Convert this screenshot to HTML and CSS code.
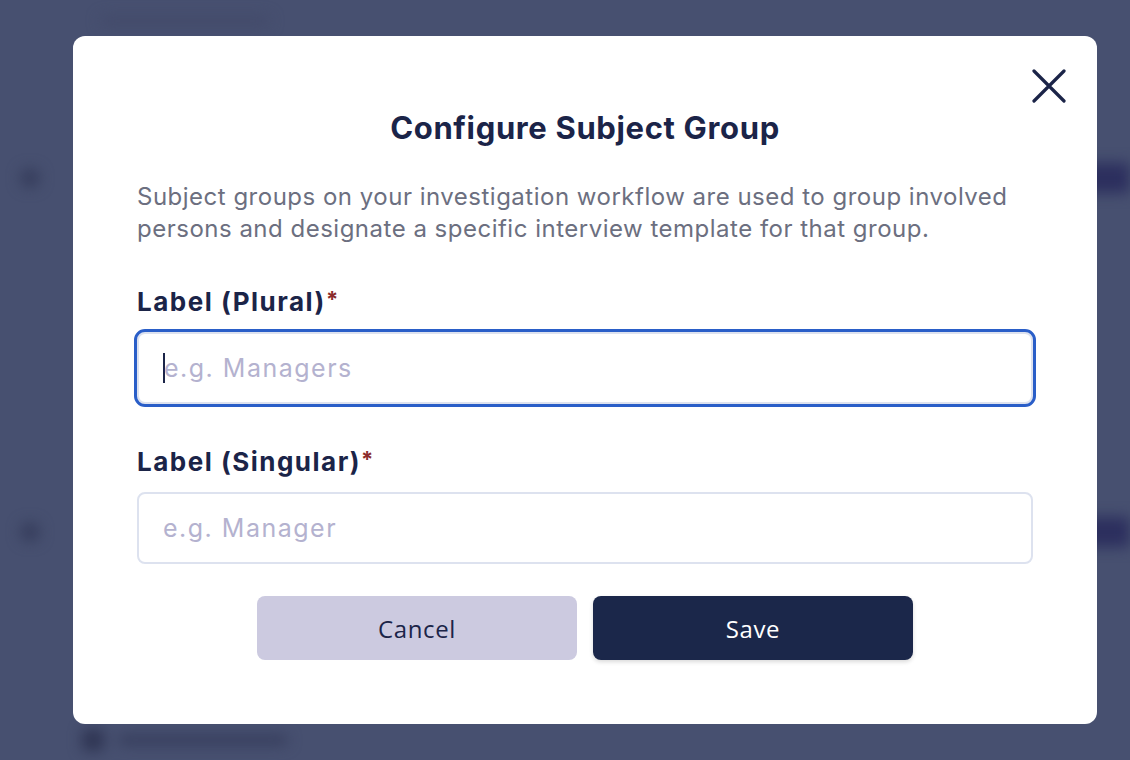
FILE: index.html
```html
<!DOCTYPE html>
<html lang="en">
<head>
<meta charset="utf-8">
<title>Configure Subject Group</title>
<link rel="stylesheet" href="styles.css">
</head>
<body>
<div class="backdrop">
  <div class="bg-top"><span class="bg-bar short"></span></div>
  <div class="bg-row"><span class="bg-dot"></span><span class="bg-pill"></span></div>
  <div class="bg-row row2"><span class="bg-dot"></span><span class="bg-pill"></span></div>
  <div class="bg-bottom"><span class="bg-icon"></span><span class="bg-bar"></span></div>
</div>
<div class="overlay">
  <div class="modal" role="dialog" aria-labelledby="title">
    <div class="modal-head">
      <button class="close" aria-label="Close">
        <svg width="34" height="34" viewBox="0 0 34 34" fill="none" stroke="#1b2448" stroke-width="3.2" stroke-linecap="round"><path d="M2 2 L32 32 M32 2 L2 32"/></svg>
      </button>
    </div>
    <h1 id="title" class="title">Configure Subject Group</h1>
    <p class="desc">Subject groups on your investigation workflow are used to group involved persons and designate a specific interview template for that group.</p>
    <label class="label">Label (Plural)<span class="req">*</span></label>
    <div class="input focused"><span class="caret"></span><span class="ph">e.g. Managers</span></div>
    <label class="label second">Label (Singular)<span class="req">*</span></label>
    <div class="input"><span class="ph">e.g. Manager</span></div>
    <div class="actions">
      <button class="btn cancel">Cancel</button>
      <button class="btn save">Save</button>
    </div>
  </div>
</div>
</body>
</html>
```
FILE: styles.css
```css
* { box-sizing: border-box; }
html, body { margin: 0; height: 760px; overflow: hidden; }
body {
  background: #475070;
  font-family: "Open Sans", "Inter", sans-serif;
  position: relative;
}
.backdrop {
  height: 760px;
  display: flex;
  flex-direction: column;
  filter: blur(7px);
}
.bg-top { height: 163px; padding: 16px 0 0 100px; }
.bg-bar { display: block; height: 10px; width: 175px; background: #3b4262; border-radius: 5px; }
.bg-bar.short { width: 170px; background: #434a6a; }
.bg-row { display: flex; justify-content: space-between; align-items: center; height: 30px; padding: 0 0 0 20px; }
.row2 { margin-top: 324px; }
.bg-dot { width: 20px; height: 20px; border-radius: 50%; background: #363d5c; }
.bg-pill { width: 60px; height: 30px; border-radius: 12px 0 0 12px; background: #2c2f5e; }
.bg-bottom { margin-top: 182px; display: flex; align-items: center; gap: 14px; padding-left: 82px; }
.bg-icon { width: 22px; height: 22px; border-radius: 5px; background: #2f3553; }
.bg-bottom .bg-bar { width: 170px; background: #363d5c; }

.overlay {
  position: absolute;
  inset: 0;
  padding: 36px 33px 36px 73px;
}
.modal {
  width: 1024px;
  height: 688px;
  background: #fff;
  border-radius: 12px;
  padding: 0 64px;
  display: flex;
  flex-direction: column;
}
.modal-head { display: flex; justify-content: flex-end; padding-top: 33px; margin-right: -33px; height: 70px; }
.close { border: 0; background: none; padding: 0; width: 34px; height: 34px; cursor: pointer; }
.close svg { display: block; }
.title {
  margin: 2px 0 0;
  text-align: center;
  font-family: "Inter", sans-serif;
  font-weight: 700;
  font-size: 31px;
  letter-spacing: 0.65px;
  color: #1b2448;
  line-height: 40px;
}
.desc {
  margin: 33px 0 0;
  font-family: "Inter", sans-serif;
  font-weight: 400;
  font-size: 24px;
  line-height: 32px;
  color: #6c6f80;
  letter-spacing: 0.5px;
}
.label {
  display: block;
  margin-top: 36px;
  font-family: "Inter", sans-serif;
  font-weight: 700;
  font-size: 26px;
  line-height: 36px;
  letter-spacing: 1.5px;
  color: #1b2448;
}
.label.second { margin-top: 37px; }
.req { color: #8b2c2c; font-size: 22px; vertical-align: 4px; margin-left: 0; }
.input {
  margin-top: 12px;
  height: 72px;
  border: 2px solid #dde2ef;
  border-radius: 8px;
  display: flex;
  align-items: center;
  padding-left: 24px;
  font-family: "Inter", sans-serif;
  font-size: 25px;
  letter-spacing: 1.5px;
  color: #b4b2cf;
}
.input.focused { outline: 3px solid #2a5ec8; outline-offset: 0; }
.caret { width: 2px; height: 30px; background: #1b2448; margin-left: 0; margin-right: -1px; }
.actions { margin-top: 32px; display: flex; justify-content: center; gap: 16px; }
.btn {
  width: 320px;
  height: 64px;
  border: 0;
  border-radius: 8px;
  font-family: "Open Sans", sans-serif;
  font-size: 24px;
  letter-spacing: 0.6px;
  cursor: pointer;
}
.cancel { background: #cccae0; color: #1b2448; }
.save { background: #1b274a; color: #fff; box-shadow: 0 2px 4px rgba(0,0,0,0.15); }
```
